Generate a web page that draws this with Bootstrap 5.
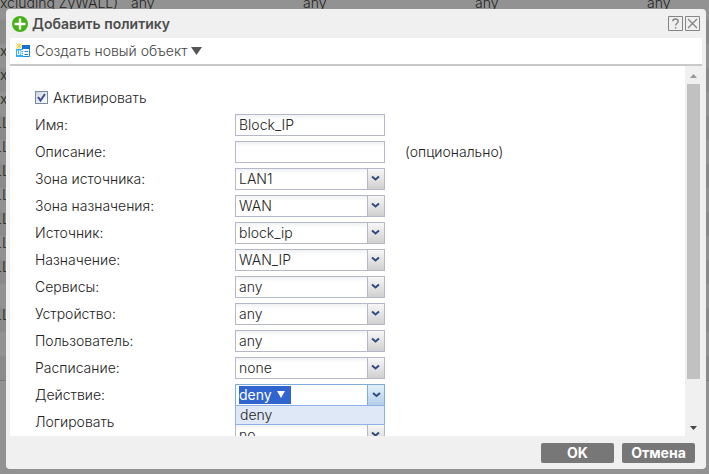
<!DOCTYPE html>
<html lang="ru">
<head>
<meta charset="utf-8">
<meta name="viewport" content="width=device-width, initial-scale=1">
<title>Добавить политику</title>
<link rel="stylesheet" href="https://cdn.jsdelivr.net/npm/bootstrap@5.3.0/dist/css/bootstrap.min.css">
<style>
  body { font: 300 14px/20px Inter, "Liberation Sans", sans-serif; color: #222; background: #929293; }
  .stage { display: grid; grid-template: 100vh / 100%; overflow: hidden; }
  .stage > * { grid-area: 1 / 1; }
  .rules { table-layout: fixed; width: 819px; color: #222; }
  .rules td { height: 24px; padding: 0; line-height: 14px; vertical-align: top; white-space: nowrap; }
  .rules tr:nth-child(even) td { background: #8a8a8b; }
  .rules td:first-child { width: 131px; }
  .rules td.cut { text-indent: -6px; }
  .rules-wrap { margin-top: -4px; overflow: hidden; }
  .rules .edge { border-top: 1px solid #777; }
  .dialog-box { z-index: 1; margin: 9px 3px 5px 6px; padding: 0 4px; background: #f0f0f0; border-radius: 4px; min-height: 0; }
  .dialog-head { height: 29px; padding: 0 2px; }
  .dialog-title { font-size: 14px; line-height: 20px; font-weight: 600; color: #4d4d4d; }
  .tool { width: 15px; height: 15px; }
  .tool-pair { gap: 2px; }
  .tool-strip { height: 28px; border-bottom: 2px solid #c8c8c8; padding-left: 5px; }
  .menu-link { color: #444; }
  .form-zone { min-height: 0; }
  .fields { overflow: hidden; padding: 18px 0 0 25px; }
  .line { min-height: 27px; display: flex; align-items: center; }
  .line > label { width: 200px; flex: none; }
  .line.tall { align-items: flex-start; }
  .line.tall > label { padding-top: 4px; }
  .line.tall > .field { margin-top: 16px; }
  .hint { margin-left: 20px; }
  .field { width: 150px; height: 22px; padding: 0 3px; border: 1px solid #b5b8c8; border-radius: 0; font-size: 14px; line-height: 20px; font-weight: 300; color: #222;
    background: linear-gradient(#f0f2f3, #fff 5px); }
  select.field { appearance: none;
    background:
      url("data:image/svg+xml,%3Csvg xmlns='http://www.w3.org/2000/svg' width='17' height='20'%3E%3Cpath d='M.5 0v20' stroke='%23b5b8c8'/%3E%3Cpath d='M5 7.500l3.500 3L12 7.500' fill='none' stroke='%23304a80' stroke-width='2'/%3E%3C/svg%3E") right center no-repeat,
      linear-gradient(#f7f7f7, #d0d0d0) right / 17px 100% no-repeat,
      linear-gradient(#f0f2f3, #fff 5px); }
  .tick { appearance: none; width: 13px; height: 13px; border: 1px solid #7a8ba0; margin: 0 5px 0 0;
    background: url("data:image/svg+xml,%3Csvg xmlns='http://www.w3.org/2000/svg' viewBox='0 0 11 11'%3E%3Cpath d='M2 5l2.500 3.500L9 2' fill='none' stroke='%233d4f91' stroke-width='2'/%3E%3C/svg%3E"), linear-gradient(135deg, #cfd5dc, #fff); }
  .line > label.tick-label { width: auto; }
  .combo { position: relative; width: 150px; }
  .combo-btn { width: 150px; height: 22px; padding: 0 0 0 3px; border: 1px solid #7eadd9; background: #fff; font-weight: 300; line-height: 18px; }
  .picked { background: #3064cf; color: #fff; font-weight: 400; height: 18px; width: 52px; gap: 5px; }
  .drop { width: 17px; background: linear-gradient(#e4f0fb, #b3cfe9); border-left: 1px solid #7eadd9; }
  .options { position: absolute; top: 21px; left: 0; z-index: 2; width: 100%; height: 20px; border: 1px solid #8db2e3; background: #dfe8f6; padding-left: 4px; line-height: 18px; }
  .scroller { width: 17px; flex: none; padding: 8px 2px 6px; gap: 6px; }
  .thumb { height: 295px; width: 13px; background: #c1c1c1; }
  .dialog-foot { height: 33px; gap: 8px; padding-right: 7px; }
  .act { width: 73px; height: 20px; border: 0; border-radius: 2px; background: #777; color: #fff; font-size: 14px; line-height: 20px; font-weight: 700; padding: 0; }
</style>
<script src="https://cdn.jsdelivr.net/npm/bootstrap@5.3.0/dist/js/bootstrap.bundle.min.js"></script>
</head>
<body>
<main class="stage">
  <div class="rules-wrap" aria-hidden="true">
    <table class="rules">
      <tbody>
        <tr><td>xcluding ZyWALL)</td><td>any</td><td>any</td><td>any</td><td>any</td></tr>
        <tr><td colspan="5"></td></tr>
        <tr><td colspan="5">x</td></tr>
        <tr><td colspan="5">x</td></tr>
        <tr><td colspan="5">x</td></tr>
        <tr><td colspan="5" class="cut">LL</td></tr>
        <tr><td colspan="5" class="cut">LL</td></tr>
        <tr><td colspan="5" class="cut">LL</td></tr>
        <tr><td colspan="5" class="cut">LL</td></tr>
        <tr><td colspan="5" class="cut">LL</td></tr>
        <tr><td colspan="5" class="cut">LL</td></tr>
        <tr><td colspan="5" class="cut">LL</td></tr>
        <tr><td colspan="5"></td></tr>
        <tr><td colspan="5" class="cut">LL</td></tr>
        <tr><td colspan="5"></td></tr>
        <tr><td colspan="5"></td></tr>
        <tr><td colspan="5" class="edge"></td></tr>
      </tbody>
    </table>
  </div>

  <section class="dialog-box d-flex flex-column" role="dialog" aria-labelledby="dlg-title">
    <header class="dialog-head d-flex align-items-center flex-shrink-0">
      <svg width="16" height="16" viewBox="0 0 16 16" class="me-1" aria-hidden="true"><circle cx="8" cy="8" r="8" fill="#45b217"/><path d="M8 3.500v9M3.500 8h9" stroke="#fff" stroke-width="2.400" stroke-linecap="round"/></svg>
      <h1 id="dlg-title" class="dialog-title m-0">Добавить политику</h1>
      <div class="tool-pair ms-auto d-flex">
        <button type="button" class="tool btn p-0 border-0 d-flex" aria-label="Справка"><svg width="15" height="15" viewBox="0 0 15 15" fill="none" stroke="#858585"><path d="M.5.5h14v14H.5z"/><path d="M4.800 5.200c0-3 5.400-3 5.400 0 0 2-2.600 2-2.600 4.300M7.600 11v1.500" stroke-width="1.400"/></svg></button>
        <button type="button" class="tool btn p-0 border-0 d-flex" aria-label="Закрыть"><svg width="15" height="15" viewBox="0 0 15 15" fill="none" stroke="#858585"><path d="M.5.5h14v14H.5z"/><path d="M3 3l9 9M12 3l-9 9" stroke-width="1.400"/></svg></button>
      </div>
    </header>

    <div class="tool-strip bg-white d-flex align-items-center flex-shrink-0">
      <a href="#" class="menu-link text-decoration-none d-flex align-items-center">
        <svg width="16" height="16" viewBox="0 0 16 16" class="me-1" aria-hidden="true"><path d="M1.500 3.500h13v10h-13z" fill="#fff" stroke="#1685dc"/><path d="M7 2h8v4H7z" fill="#1272d8"/><path d="M1 6h7v8H1z" fill="#35aef0"/><path d="M2.500 7.500v4h2v-4M8 7.500H6v4h2M6 9.500h2" stroke="#fff" fill="none"/><path d="M9.500 8.500H13M9.500 11.500H13" stroke="#1685dc"/><path d="M1 0h6v6H1z" fill="#fff"/><path d="M4 0v6M1 3h6M1.500.5l5 5M6.500.5l-5 5" stroke="#f3cf3c"/></svg>
        <span>Создать новый объект</span>
        <svg width="11" height="8" viewBox="0 0 11 8" class="ms-1" aria-hidden="true"><path d="M0 0h11L5.500 8z" fill="#555"/></svg>
      </a>
    </div>

    <div class="form-zone d-flex flex-grow-1">
      <form class="fields bg-white flex-grow-1">
        <div class="line"><input class="tick" type="checkbox" id="f-on" checked><label class="tick-label" for="f-on">Активировать</label></div>
        <div class="line"><label for="f-name">Имя:</label><input id="f-name" class="field" type="text" value="Block_IP"></div>
        <div class="line"><label for="f-desc">Описание:</label><input id="f-desc" class="field" type="text"><span class="hint">(опционально)</span></div>
        <div class="line"><label for="f-from">Зона источника:</label><select id="f-from" class="field"><option>LAN1</option></select></div>
        <div class="line"><label for="f-to">Зона назначения:</label><select id="f-to" class="field"><option>WAN</option></select></div>
        <div class="line"><label for="f-src">Источник:</label><select id="f-src" class="field"><option>block_ip</option></select></div>
        <div class="line"><label for="f-dst">Назначение:</label><select id="f-dst" class="field"><option>WAN_IP</option></select></div>
        <div class="line"><label for="f-svc">Сервисы:</label><select id="f-svc" class="field"><option>any</option></select></div>
        <div class="line"><label for="f-dev">Устройство:</label><select id="f-dev" class="field"><option>any</option></select></div>
        <div class="line"><label for="f-user">Пользователь:</label><select id="f-user" class="field"><option>any</option></select></div>
        <div class="line"><label for="f-time">Расписание:</label><select id="f-time" class="field"><option>none</option></select></div>
        <div class="line"><label for="f-act">Действие:</label>
          <div class="combo">
            <button type="button" id="f-act" class="combo-btn d-flex align-items-center" aria-haspopup="listbox" aria-expanded="true">
              <span class="picked d-flex align-items-center">deny<svg width="8" height="7" viewBox="0 0 8 7" aria-hidden="true"><path d="M0 0h8L4 7z" fill="#fff"/></svg></span>
              <span class="drop ms-auto h-100 d-flex align-items-center justify-content-center"><svg width="9" height="6" viewBox="0 0 9 6" aria-hidden="true"><path d="M1 1l3.500 3L8 1" fill="none" stroke="#304a80" stroke-width="2"/></svg></span>
            </button>
            <div class="options" role="listbox"><div role="option" aria-selected="true">deny</div></div>
          </div>
        </div>
        <div class="line tall"><label for="f-log">Логировать<br>по соответствующей</label><select id="f-log" class="field"><option>no</option></select></div>
      </form>
      <div class="scroller d-flex flex-column align-items-center" aria-hidden="true">
        <svg width="7" height="4" viewBox="0 0 7 4"><path d="M0 4h7L3.500 0z" fill="#999"/></svg>
        <div class="thumb"></div>
        <svg width="7" height="4" viewBox="0 0 7 4" class="mt-auto"><path d="M0 0h7L3.500 4z" fill="#444"/></svg>
      </div>
    </div>

    <footer class="dialog-foot d-flex align-items-center justify-content-end flex-shrink-0">
      <button type="button" class="act">OK</button>
      <button type="button" class="act">Отмена</button>
    </footer>
  </section>
</main>
</body>
</html>
